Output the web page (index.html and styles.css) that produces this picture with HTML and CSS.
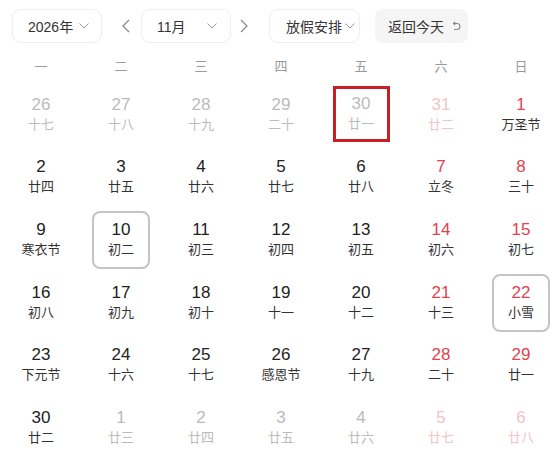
FILE: index.html
```html
<!DOCTYPE html>
<html lang="zh-CN">
<head>
<meta charset="utf-8">
<title>日历</title>
<link rel="stylesheet" href="styles.css">
</head>
<body>
<div class="page">
  <div class="toolbar">
    <div class="select year"><span>2026年</span><svg class="chev" viewBox="0 0 10 6"><path d="M0.5 0.5 L5 5 L9.5 0.5"/></svg></div>
    <div class="arrow prev"><svg viewBox="0 0 8 14"><path d="M7 1 L1 7 L7 13"/></svg></div>
    <div class="select month"><span>11月</span><svg class="chev" viewBox="0 0 10 6"><path d="M0.5 0.5 L5 5 L9.5 0.5"/></svg></div>
    <div class="arrow next"><svg viewBox="0 0 8 14"><path d="M1 1 L7 7 L1 13"/></svg></div>
    <div class="select holiday"><span>放假安排</span><svg class="chev" viewBox="0 0 10 6"><path d="M0.5 0.5 L5 5 L9.5 0.5"/></svg></div>
    <div class="today-btn"><span>返回今天</span><svg class="undo" viewBox="0 0 9 10"><path d="M1.5 2.5 H5 A3 3 0 0 1 5 8.5 H2"/><path d="M3.2 0.8 L1.5 2.5 L3.2 4.2"/></svg></div>
  </div>
  <div class="weekdays">
    <div>一</div><div>二</div><div>三</div><div>四</div><div>五</div><div>六</div><div>日</div>
  </div>
  <div class="grid">
    <div class="cell other"><div class="box"><div class="num">26</div><div class="lunar">十七</div></div></div>
    <div class="cell other"><div class="box"><div class="num">27</div><div class="lunar">十八</div></div></div>
    <div class="cell other"><div class="box"><div class="num">28</div><div class="lunar">十九</div></div></div>
    <div class="cell other"><div class="box"><div class="num">29</div><div class="lunar">二十</div></div></div>
    <div class="cell other today"><div class="box"><div class="num">30</div><div class="lunar">廿一</div></div></div>
    <div class="cell other weekend"><div class="box"><div class="num">31</div><div class="lunar">廿二</div></div></div>
    <div class="cell weekend"><div class="box"><div class="num">1</div><div class="lunar">万圣节</div></div></div>

    <div class="cell"><div class="box"><div class="num">2</div><div class="lunar">廿四</div></div></div>
    <div class="cell"><div class="box"><div class="num">3</div><div class="lunar">廿五</div></div></div>
    <div class="cell"><div class="box"><div class="num">4</div><div class="lunar">廿六</div></div></div>
    <div class="cell"><div class="box"><div class="num">5</div><div class="lunar">廿七</div></div></div>
    <div class="cell"><div class="box"><div class="num">6</div><div class="lunar">廿八</div></div></div>
    <div class="cell weekend"><div class="box"><div class="num">7</div><div class="lunar">立冬</div></div></div>
    <div class="cell weekend"><div class="box"><div class="num">8</div><div class="lunar">三十</div></div></div>

    <div class="cell"><div class="box"><div class="num">9</div><div class="lunar">寒衣节</div></div></div>
    <div class="cell selected"><div class="box"><div class="num">10</div><div class="lunar">初二</div></div></div>
    <div class="cell"><div class="box"><div class="num">11</div><div class="lunar">初三</div></div></div>
    <div class="cell"><div class="box"><div class="num">12</div><div class="lunar">初四</div></div></div>
    <div class="cell"><div class="box"><div class="num">13</div><div class="lunar">初五</div></div></div>
    <div class="cell weekend"><div class="box"><div class="num">14</div><div class="lunar">初六</div></div></div>
    <div class="cell weekend"><div class="box"><div class="num">15</div><div class="lunar">初七</div></div></div>

    <div class="cell"><div class="box"><div class="num">16</div><div class="lunar">初八</div></div></div>
    <div class="cell"><div class="box"><div class="num">17</div><div class="lunar">初九</div></div></div>
    <div class="cell"><div class="box"><div class="num">18</div><div class="lunar">初十</div></div></div>
    <div class="cell"><div class="box"><div class="num">19</div><div class="lunar">十一</div></div></div>
    <div class="cell"><div class="box"><div class="num">20</div><div class="lunar">十二</div></div></div>
    <div class="cell weekend"><div class="box"><div class="num">21</div><div class="lunar">十三</div></div></div>
    <div class="cell weekend selected"><div class="box"><div class="num">22</div><div class="lunar">小雪</div></div></div>

    <div class="cell"><div class="box"><div class="num">23</div><div class="lunar">下元节</div></div></div>
    <div class="cell"><div class="box"><div class="num">24</div><div class="lunar">十六</div></div></div>
    <div class="cell"><div class="box"><div class="num">25</div><div class="lunar">十七</div></div></div>
    <div class="cell"><div class="box"><div class="num">26</div><div class="lunar">感恩节</div></div></div>
    <div class="cell"><div class="box"><div class="num">27</div><div class="lunar">十九</div></div></div>
    <div class="cell weekend"><div class="box"><div class="num">28</div><div class="lunar">二十</div></div></div>
    <div class="cell weekend"><div class="box"><div class="num">29</div><div class="lunar">廿一</div></div></div>

    <div class="cell"><div class="box"><div class="num">30</div><div class="lunar">廿二</div></div></div>
    <div class="cell other"><div class="box"><div class="num">1</div><div class="lunar">廿三</div></div></div>
    <div class="cell other"><div class="box"><div class="num">2</div><div class="lunar">廿四</div></div></div>
    <div class="cell other"><div class="box"><div class="num">3</div><div class="lunar">廿五</div></div></div>
    <div class="cell other"><div class="box"><div class="num">4</div><div class="lunar">廿六</div></div></div>
    <div class="cell other weekend"><div class="box"><div class="num">5</div><div class="lunar">廿七</div></div></div>
    <div class="cell other weekend"><div class="box"><div class="num">6</div><div class="lunar">廿八</div></div></div>
  </div>
</div>
</body>
</html>
```

FILE: styles.css
```css
html, body {
  margin: 0;
  padding: 0;
  background: #fff;
  overflow: hidden;
}
body {
  width: 558px;
  height: 466px;
  font-family: "Liberation Sans", "Noto Sans CJK SC", sans-serif;
  color: #222;
}
.page {
  padding-top: 9px;
}
.toolbar {
  display: flex;
  align-items: center;
  padding-left: 12px;
  height: 34px;
}
.select {
  box-sizing: border-box;
  height: 34px;
  border: 1px solid #efefef;
  border-radius: 9px;
  display: flex;
  align-items: center;
  justify-content: space-between;
  font-size: 14px;
  color: #333;
  box-shadow: 0 0 2px rgba(0,0,0,0.03);
}
.select.year {
  width: 90px;
  padding: 0 12px 0 15px;
}
.select.month {
  width: 90px;
  padding: 0 13px 0 15px;
}
.select.holiday {
  width: 91px;
  padding: 0 4px 0 16px;
}
.chev {
  width: 10px;
  height: 6px;
  fill: none;
  stroke: #999;
  stroke-width: 1;
}
.arrow {
  width: 16px;
  height: 34px;
  display: flex;
  align-items: center;
  justify-content: center;
}
.arrow svg {
  width: 8px;
  height: 14px;
  fill: none;
  stroke: #888;
  stroke-width: 1.2;
}
.arrow.prev {
  margin-left: 16px;
  margin-right: 7px;
}
.arrow.next {
  margin-left: 5px;
  margin-right: 17px;
}
.today-btn {
  margin-left: 15px;
  width: 93px;
  height: 34px;
  box-sizing: border-box;
  background: #f5f5f5;
  border-radius: 8px;
  display: flex;
  align-items: center;
  padding-left: 13px;
  font-size: 14px;
  color: #333;
}
.undo {
  width: 9px;
  height: 10px;
  margin-left: 8px;
  fill: none;
  stroke: #888;
  stroke-width: 1.1;
}
.weekdays {
  display: grid;
  grid-template-columns: repeat(7, 80px);
  margin-left: 1px;
  margin-top: 14px;
  height: 20px;
  line-height: 20px;
  font-size: 13px;
  color: #999;
  text-align: center;
}
.grid {
  display: grid;
  grid-template-columns: repeat(7, 80px);
  grid-auto-rows: 58px;
  row-gap: 4.7px;
  margin-left: 1px;
  margin-top: 8.5px;
}
.cell {
  display: flex;
  justify-content: center;
}
.box {
  box-sizing: border-box;
  width: 58px;
  height: 58px;
  border: 2px solid transparent;
  border-radius: 8px;
  display: flex;
  flex-direction: column;
  align-items: center;
  justify-content: center;
}
.num {
  font-size: 17px;
  line-height: 20px;
  color: #222;
}
.lunar {
  font-size: 13px;
  line-height: 20px;
  color: #333;
}
.weekend .num {
  color: #e2424f;
}
.other .num,
.other .lunar {
  color: #bbb;
}
.other.weekend .num,
.other.weekend .lunar {
  color: #f3c3c7;
}
.selected .box {
  border-color: #c4c4c4;
}
.today .box {
  width: 57px;
  height: 56px;
  border: 3px solid #c81e24;
  border-radius: 0;
}
```
